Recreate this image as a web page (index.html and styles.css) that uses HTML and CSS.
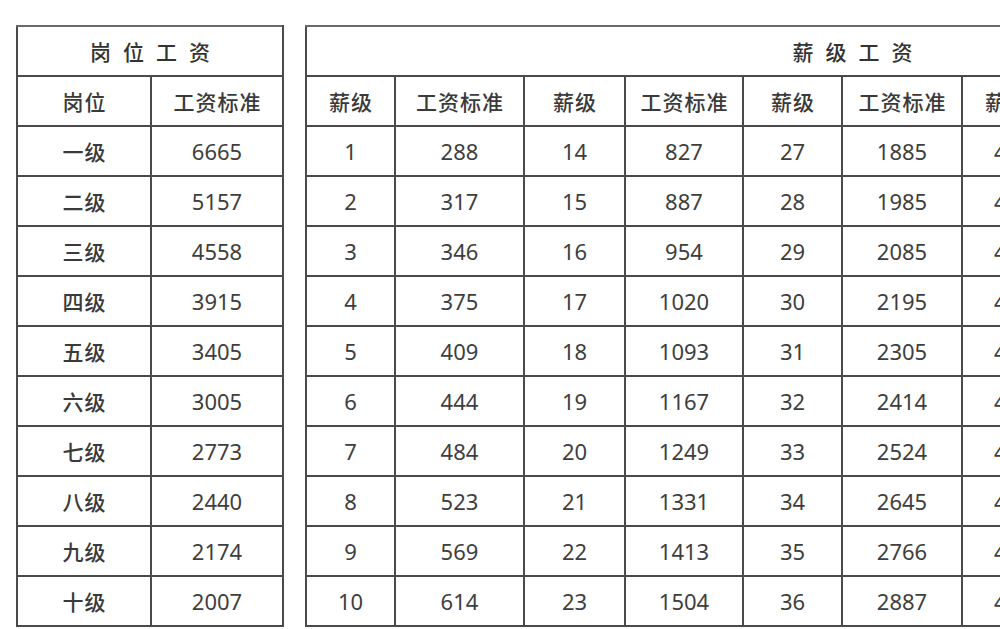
FILE: index.html
```html
<!DOCTYPE html>
<html lang="zh-CN">
<head>
<meta charset="utf-8">
<title>岗位工资 / 薪级工资</title>
<link rel="stylesheet" href="styles.css">
</head>
<body>
<div class="page">
  <table class="grid left">
    <colgroup><col class="c134"><col class="c132"></colgroup>
    <tr><th colspan="2" class="title">岗位工资</th></tr>
    <tr><th class="sub">岗位</th><th class="sub">工资标准</th></tr>
    <tr><td class="cn">一级</td><td>6665</td></tr>
    <tr><td class="cn">二级</td><td>5157</td></tr>
    <tr><td class="cn">三级</td><td>4558</td></tr>
    <tr><td class="cn">四级</td><td>3915</td></tr>
    <tr><td class="cn">五级</td><td>3405</td></tr>
    <tr><td class="cn">六级</td><td>3005</td></tr>
    <tr><td class="cn">七级</td><td>2773</td></tr>
    <tr><td class="cn">八级</td><td>2440</td></tr>
    <tr><td class="cn">九级</td><td>2174</td></tr>
    <tr><td class="cn">十级</td><td>2007</td></tr>
  </table>

  <table class="grid right">
    <colgroup>
      <col class="c89"><col class="c129"><col class="c101"><col class="c118"><col class="c99">
      <col class="c120"><col class="c89"><col class="c129"><col class="c101"><col class="c118">
    </colgroup>
    <tr><th colspan="10" class="title">薪级工资</th></tr>
    <tr>
      <th class="sub">薪级</th><th class="sub">工资标准</th>
      <th class="sub">薪级</th><th class="sub">工资标准</th>
      <th class="sub">薪级</th><th class="sub">工资标准</th>
      <th class="sub">薪级</th><th class="sub">工资标准</th>
      <th class="sub">薪级</th><th class="sub">工资标准</th>
    </tr>
    <tr><td>1</td><td>288</td><td>14</td><td>827</td><td>27</td><td>1885</td><td>40</td><td>3163</td><td>53</td><td>5068</td></tr>
    <tr><td>2</td><td>317</td><td>15</td><td>887</td><td>28</td><td>1985</td><td>41</td><td>3296</td><td>54</td><td>5276</td></tr>
    <tr><td>3</td><td>346</td><td>16</td><td>954</td><td>29</td><td>2085</td><td>42</td><td>3437</td><td>55</td><td>5484</td></tr>
    <tr><td>4</td><td>375</td><td>17</td><td>1020</td><td>30</td><td>2195</td><td>43</td><td>3578</td><td>56</td><td>5693</td></tr>
    <tr><td>5</td><td>409</td><td>18</td><td>1093</td><td>31</td><td>2305</td><td>44</td><td>3720</td><td>57</td><td>5911</td></tr>
    <tr><td>6</td><td>444</td><td>19</td><td>1167</td><td>32</td><td>2414</td><td>45</td><td>3875</td><td>58</td><td>6129</td></tr>
    <tr><td>7</td><td>484</td><td>20</td><td>1249</td><td>33</td><td>2524</td><td>46</td><td>4030</td><td>59</td><td>6348</td></tr>
    <tr><td>8</td><td>523</td><td>21</td><td>1331</td><td>34</td><td>2645</td><td>47</td><td>4195</td><td>60</td><td>6566</td></tr>
    <tr><td>9</td><td>569</td><td>22</td><td>1413</td><td>35</td><td>2766</td><td>48</td><td>4360</td><td>61</td><td>6784</td></tr>
    <tr><td>10</td><td>614</td><td>23</td><td>1504</td><td>36</td><td>2887</td><td>49</td><td>4525</td><td>62</td><td>7003</td></tr>
  </table>
</div>
</body>
</html>
```
FILE: styles.css
```css
html, body {
  margin: 0;
  padding: 0;
  background: #ffffff;
  overflow: hidden;
}

body {
  width: 1000px;
  height: 629px;
  font-family: "Noto Sans", "Noto Sans CJK SC", sans-serif;
  color: #3e3e3e;
}

.page {
  display: flex;
  align-items: flex-start;
  gap: 21px;
  padding: 25px 0 0 16px;
  width: max-content;
}

.grid {
  border-collapse: collapse;
  table-layout: fixed;
  flex: none;
}

.left { width: 268px; }
.right { width: 1094px; }

.c134 { width: 134px; }
.c132 { width: 132px; }
.c89 { width: 89px; }
.c129 { width: 129px; }
.c101 { width: 101px; }
.c118 { width: 118px; }
.c99 { width: 99px; }
.c120 { width: 120px; }

.grid th,
.grid td {
  border: 2px solid #4a4a4a;
  height: 48px;
  padding: 0;
  text-align: center;
  vertical-align: middle;
  font-size: 22px;
  font-weight: 400;
  line-height: 1;
  white-space: nowrap;
  overflow: hidden;
}

.grid .title {
  font-family: "Noto Sans CJK SC", sans-serif;
  font-size: 21px;
  font-weight: 500;
  letter-spacing: 12px;
  padding-left: 12px;
  color: #333333;
  border-top-color: #6a6a6a;
}

.grid .sub,
.grid .cn {
  font-family: "Noto Sans CJK SC", sans-serif;
  font-size: 21px;
  font-weight: 500;
  letter-spacing: 1px;
  padding-left: 1px;
  color: #3a3a3a;
}
```
